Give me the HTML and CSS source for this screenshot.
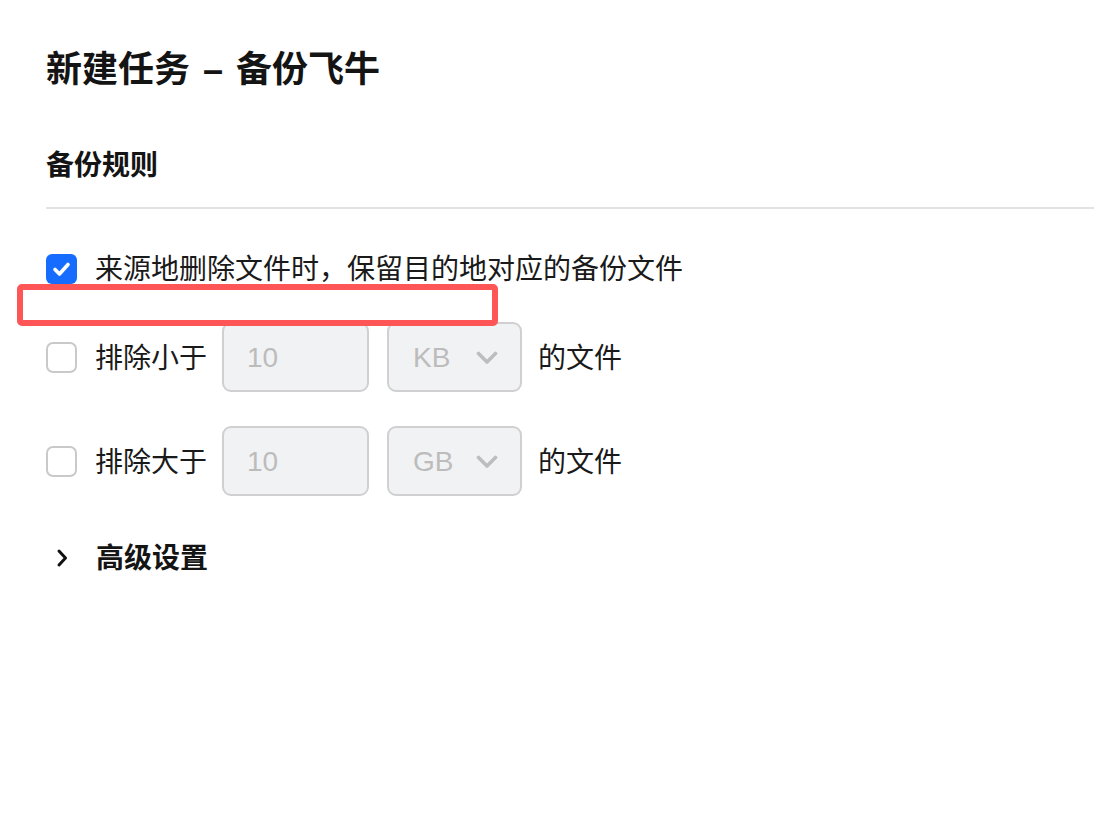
FILE: index.html
```html
<!DOCTYPE html>
<html lang="zh-CN">
<head>
<meta charset="utf-8">
<title>新建任务 - 备份飞牛</title>
<link rel="stylesheet" href="styles.css">
</head>
<body>
<div class="page">
  <h1 class="title">新建任务<span class="dash">–</span>备份飞牛</h1>
  <h2 class="section-title">备份规则</h2>

  <div class="row row-first">
    <span class="checkbox checked">
      <svg viewBox="0 0 31 30" width="31" height="30"><path d="M9 15.5 L13.5 20 L22 10.5" fill="none" stroke="#fff" stroke-width="3.6" stroke-linecap="round" stroke-linejoin="round"/></svg>
    </span>
    <span class="label">来源地删除文件时，保留目的地对应的备份文件</span>
  </div>

  <div class="row row-field">
    <span class="checkbox"></span>
    <span class="label">排除小于</span>
    <div class="input">10</div>
    <div class="select"><span>KB</span>
      <svg class="chev" viewBox="0 0 22 14" width="22" height="14"><path d="M2.5 2.5 L11 11 L19.5 2.5" fill="none" stroke="#bdbdbd" stroke-width="3.6" stroke-linecap="round" stroke-linejoin="round"/></svg>
    </div>
    <span class="label suffix">的文件</span>
  </div>

  <div class="row row-field">
    <span class="checkbox"></span>
    <span class="label">排除大于</span>
    <div class="input">10</div>
    <div class="select"><span>GB</span>
      <svg class="chev" viewBox="0 0 22 14" width="22" height="14"><path d="M2.5 2.5 L11 11 L19.5 2.5" fill="none" stroke="#bdbdbd" stroke-width="3.6" stroke-linecap="round" stroke-linejoin="round"/></svg>
    </div>
    <span class="label suffix">的文件</span>
  </div>

  <div class="row advanced">
    <span class="adv-icon">
      <svg viewBox="0 0 12 20" width="12" height="20"><path d="M3 3 L9.5 10 L3 17" fill="none" stroke="#111" stroke-width="3" stroke-linecap="round" stroke-linejoin="round"/></svg>
    </span>
    <span class="label adv-label">高级设置</span>
  </div>

  <div class="highlight"></div>
</div>
</body>
</html>
```

FILE: styles.css
```css
* { box-sizing: border-box; }

html, body {
  margin: 0;
  padding: 0;
  background: #ffffff;
}

body {
  font-family: "Liberation Sans", "Noto Sans CJK SC", sans-serif;
  color: #1a1a1a;
  overflow: hidden;
}

.page {
  position: relative;
  width: 1094px;
  height: 838px;
  padding: 46px 0 0 46px;
}

.title {
  margin: 0;
  font-size: 36px;
  line-height: 44px;
  padding-top: 2px;
  height: 44px;
  font-weight: 700;
  color: #141414;
}

.dash {
  display: inline-block;
  margin: 0 13px 0 13px;
}

.section-title {
  margin: 54px 0 0 0;
  font-size: 28px;
  line-height: 40px;
  font-weight: 700;
  color: #141414;
  padding-top: 2px;
  padding-bottom: 21px;
  border-bottom: 2px solid #e2e2e2;
}

.row {
  display: flex;
  align-items: center;
}

.row-first {
  margin-top: 39px;
  height: 40px;
}

.row-field {
  margin-top: 34px;
  height: 70px;
}

.label {
  font-size: 28px;
  line-height: 40px;
  padding-top: 4px;
  color: #1a1a1a;
  white-space: nowrap;
}

.checkbox {
  width: 31px;
  height: 31px;
  flex: none;
  margin-right: 18px;
  border: 2px solid #c9c9c9;
  border-radius: 7px;
  background: #fff;
  display: flex;
}

.checkbox.checked {
  border: none;
  background: #166cff;
  border-radius: 6px;
  height: 30px;
  margin-top: 2px;
}

.input {
  margin-left: 15px;
  width: 147px;
  height: 70px;
  border: 2px solid #d0d0d2;
  border-radius: 9px;
  background: #f1f2f4;
  padding-left: 23px;
  padding-top: 2px;
  display: flex;
  align-items: center;
  font-size: 28px;
  color: #bcbcbc;
}

.select {
  margin-left: 18px;
  width: 135px;
  height: 70px;
  border: 2px solid #d0d0d2;
  border-radius: 9px;
  background: #f1f2f4;
  padding: 2px 22px 0 24px;
  display: flex;
  align-items: center;
  justify-content: space-between;
  font-size: 28px;
  color: #bcbcbc;
}

.chev { display: block; }

.suffix { margin-left: 16px; }

.advanced {
  margin-top: 41px;
  height: 40px;
}

.adv-icon {
  width: 50px;
  padding-left: 10px;
  padding-top: 2px;
  display: flex;
  align-items: center;
}

.adv-icon svg { display: block; }

.adv-label { font-weight: 700; color: #141414; }

.highlight {
  position: absolute;
  left: 17px;
  top: 284px;
  width: 481px;
  height: 42px;
  border: 6px solid #fe5656;
  border-radius: 5px;
  pointer-events: none;
}
```
